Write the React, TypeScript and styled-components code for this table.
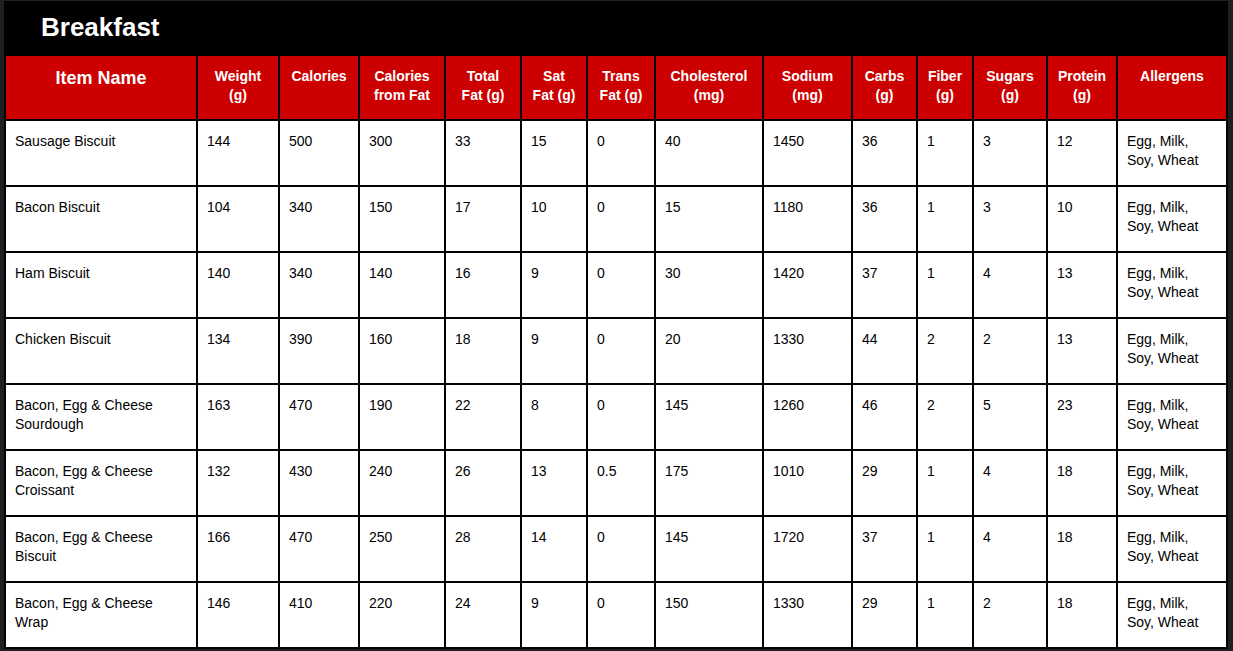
import React from "react";
import styled, { createGlobalStyle } from "styled-components";

const GlobalStyle = createGlobalStyle`
  html, body { margin: 0; padding: 0; background: #1f1f1f; }
  body { font-family: "Liberation Sans", Arial, sans-serif; }
`;

const Page = styled.div`
  padding: 0 5px 0 4px;
  width: 1224px;
`;

const TitleBar = styled.div`
  height: 54px;
  background: #000;
  border-top: 1px solid #1f1f1f;
  box-sizing: border-box;
  display: flex;
  align-items: center;
  padding-left: 37px;
  padding-bottom: 2px;
`;

const Title = styled.h2`
  margin: 0;
  color: #fff;
  font-size: 26px;
  font-weight: 700;
  line-height: 1;
`;

const Grid = styled.div`
  display: grid;
  grid-template-columns: 190px 80px 78px 84px 74px 64px 66px 106px 87px 63px 54px 72px 68px 108px;
  gap: 2px;
  padding: 2px;
  background: #000;
`;

const HeadCell = styled.div<{ $big?: boolean }>`
  background: #cc0000;
  color: #fff;
  font-weight: 700;
  font-size: ${(p) => (p.$big ? "18px" : "14px")};
  line-height: ${(p) => (p.$big ? "25px" : "19px")};
  text-align: center;
  height: 63px;
  box-sizing: border-box;
  padding: ${(p) => (p.$big ? "10px 4px 0" : "11px 4px 0")};
`;

const Cell = styled.div`
  background: #fff;
  color: #000;
  font-size: 14px;
  line-height: 19px;
  height: 64px;
  box-sizing: border-box;
  padding: 11px 9px 0;
`;

const headers: string[][] = [
  ["Item Name"],
  ["Weight", "(g)"],
  ["Calories"],
  ["Calories", "from Fat"],
  ["Total", "Fat (g)"],
  ["Sat", "Fat (g)"],
  ["Trans", "Fat (g)"],
  ["Cholesterol", "(mg)"],
  ["Sodium", "(mg)"],
  ["Carbs", "(g)"],
  ["Fiber", "(g)"],
  ["Sugars", "(g)"],
  ["Protein", "(g)"],
  ["Allergens"],
];

const rows: string[][] = [
  ["Sausage Biscuit", "144", "500", "300", "33", "15", "0", "40", "1450", "36", "1", "3", "12"],
  ["Bacon Biscuit", "104", "340", "150", "17", "10", "0", "15", "1180", "36", "1", "3", "10"],
  ["Ham Biscuit", "140", "340", "140", "16", "9", "0", "30", "1420", "37", "1", "4", "13"],
  ["Chicken Biscuit", "134", "390", "160", "18", "9", "0", "20", "1330", "44", "2", "2", "13"],
  ["Bacon, Egg & Cheese Sourdough", "163", "470", "190", "22", "8", "0", "145", "1260", "46", "2", "5", "23"],
  ["Bacon, Egg & Cheese Croissant", "132", "430", "240", "26", "13", "0.5", "175", "1010", "29", "1", "4", "18"],
  ["Bacon, Egg & Cheese Biscuit", "166", "470", "250", "28", "14", "0", "145", "1720", "37", "1", "4", "18"],
  ["Bacon, Egg & Cheese Wrap", "146", "410", "220", "24", "9", "0", "150", "1330", "29", "1", "2", "18"],
];

export default function App() {
  return (
    <>
      <GlobalStyle />
      <Page>
        <TitleBar>
          <Title>Breakfast</Title>
        </TitleBar>
        <Grid>
          {headers.map((h, i) => (
            <HeadCell key={i} $big={i === 0}>
              {h.map((line, j) => (
                <React.Fragment key={j}>
                  {j > 0 && <br />}
                  {line}
                </React.Fragment>
              ))}
            </HeadCell>
          ))}
          {rows.map((r, ri) => (
            <React.Fragment key={ri}>
              {r.map((v, ci) => (
                <Cell key={ci}>{v}</Cell>
              ))}
              <Cell>Egg, Milk, Soy, Wheat</Cell>
            </React.Fragment>
          ))}
        </Grid>
      </Page>
    </>
  );
}
